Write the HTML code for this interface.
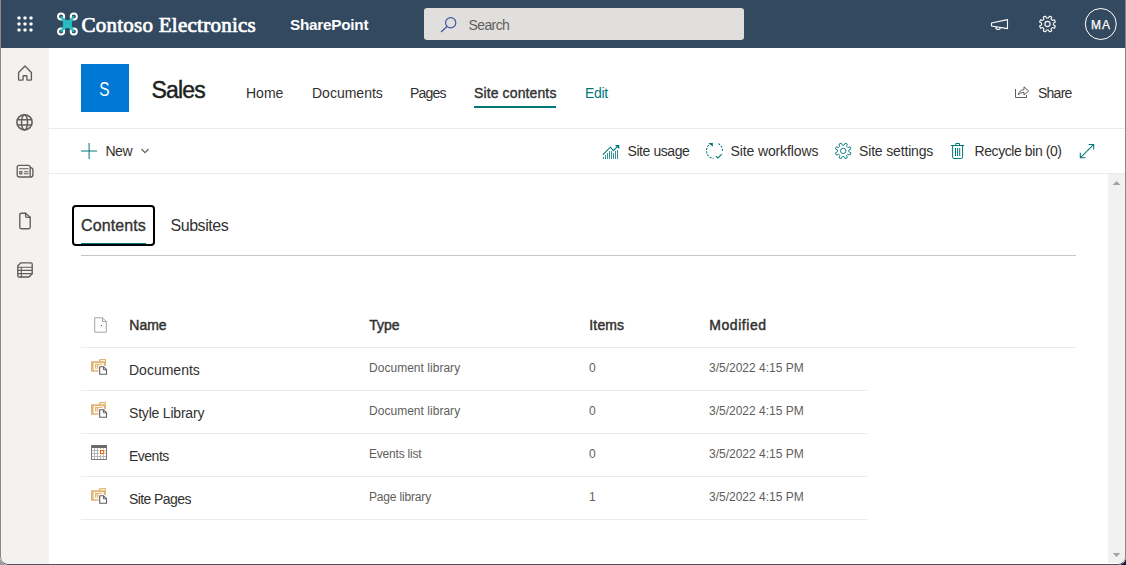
<!DOCTYPE html>
<html>
<head>
<meta charset="utf-8">
<title>Sales - Site contents</title>
<style>
*{box-sizing:border-box;margin:0;padding:0}
html,body{width:1126px;height:565px;overflow:hidden;background:linear-gradient(90deg,#9a9a9a 0,#9a9a9a 50%,#0f1c33 50%,#0f1c33 100%)}
body{font-family:"Liberation Sans",sans-serif;color:#323130;position:relative}
.t{position:absolute;white-space:nowrap;line-height:1}
#win{position:absolute;left:0;top:0;width:1126px;height:565px;background:#fff;overflow:hidden;border-radius:0 0 8px 8px}
#edge{position:absolute;left:0;top:0;width:1126px;height:565px;border:1px solid #8a8886;border-top:0;border-bottom-color:#4f5358;border-radius:0 0 8px 8px}
#hdr{position:absolute;left:1px;top:0;width:1124px;height:47.5px;background:#33495f}
#nav{position:absolute;left:1px;top:48px;width:48px;height:517px;background:#f3f2f1}
#search{position:absolute;left:424px;top:8px;width:320px;height:32px;background:#e1dfdd;border-radius:3px}
#sitelogo{position:absolute;left:81px;top:64px;width:48px;height:48px;background:#0078d4}
.hl{position:absolute;background:#edebe9;height:1px}
#sb{position:absolute;left:1108px;top:174px;width:17px;height:389px;background:#f1f1f1}
</style>
</head>
<body>
<div id="win">
  <!-- top suite bar -->
  <div id="hdr"></div>
  <span class="t" id="brand" style="left:81.5px;top:14.5px;font-family:'Liberation Serif',serif;font-size:21px;letter-spacing:0.25px;-webkit-text-stroke:0.72px #fff;color:#fff">Contoso Electronics</span>
  <span class="t" id="sp" style="left:290px;top:16.7px;font-weight:bold;font-size:15.3px;letter-spacing:-0.25px;color:#fff">SharePoint</span>
  <div id="search"></div>
  <span class="t" id="srch" style="left:468.5px;top:17.5px;font-size:14px;letter-spacing:-0.6px;color:#605e5c">Search</span>

  <span class="t" id="ma" style="left:1091px;top:19.2px;font-size:12px;color:#fff;letter-spacing:0.9px;-webkit-text-stroke:0.25px #fff">MA</span>

  <!-- left nav -->
  <div id="nav"></div>

  <!-- site header -->
  <div id="sitelogo"></div>
  <span class="t" id="sl" style="left:98px;top:79.7px;width:13px;text-align:center;font-size:19.3px;color:#fff;transform:scaleX(.8);transform-origin:50% 50%">S</span>
  <span class="t" id="title" style="left:151.5px;top:79px;font-size:23px;letter-spacing:-0.8px;-webkit-text-stroke:0.45px #201f1e;color:#201f1e">Sales</span>
  <span class="t" id="n1" style="left:246px;top:86px;font-size:14px">Home</span>
  <span class="t" id="n2" style="left:312px;top:86px;font-size:14px">Documents</span>
  <span class="t" id="n3" style="left:410px;top:86px;font-size:14px;letter-spacing:-0.8px">Pages</span>
  <span class="t" id="n4" style="left:474px;top:86px;font-size:14px;letter-spacing:0.12px;-webkit-text-stroke:0.35px #323130">Site contents</span>
  <div style="position:absolute;left:474px;top:106px;width:82px;height:2px;background:#03787c"></div>
  <span class="t" id="n5" style="left:585px;top:86px;font-size:14px;letter-spacing:-0.3px;color:#03787c">Edit</span>
  <span class="t" id="share" style="left:1038px;top:86px;font-size:14px;letter-spacing:-0.75px">Share</span>
  <div class="hl" style="left:49px;top:128px;width:1076px"></div>

  <!-- command bar -->
  <span class="t" id="new" style="left:105.5px;top:144px;font-size:14px;letter-spacing:-0.5px">New</span>
  <span class="t" id="c1" style="left:627.5px;top:144px;font-size:14px;letter-spacing:-0.42px">Site usage</span>
  <span class="t" id="c2" style="left:730.5px;top:144px;font-size:14px;letter-spacing:-0.12px">Site workflows</span>
  <span class="t" id="c3" style="left:859px;top:144px;font-size:14px;letter-spacing:-0.16px">Site settings</span>
  <span class="t" id="c4" style="left:974.5px;top:144px;font-size:14px;letter-spacing:-0.42px">Recycle bin (0)</span>
  <div class="hl" style="left:49px;top:173px;width:1076px"></div>

  <!-- tabs -->
  <div style="position:absolute;left:72px;top:205px;width:83px;height:41px;border:2px solid #000;border-radius:4px"></div>
  <span class="t" id="tab1" style="left:81px;top:217.6px;font-size:16px;letter-spacing:0.1px;-webkit-text-stroke:0.35px #323130">Contents</span>
  <div style="position:absolute;left:81px;top:243px;width:65px;height:1px;background:#03787c"></div>
  <span class="t" id="tab2" style="left:170.5px;top:217.6px;font-size:16px;letter-spacing:-0.45px">Subsites</span>
  <div class="hl" style="left:81px;top:255px;width:995px;background:#c8c6c4"></div>

  <!-- table -->
  <span class="t" id="h1" style="left:129.3px;top:318px;font-size:14px;-webkit-text-stroke:0.45px #323130">Name</span>
  <span class="t" id="h2" style="left:369.3px;top:318px;font-size:14px;-webkit-text-stroke:0.45px #323130">Type</span>
  <span class="t" id="h3" style="left:589.3px;top:318px;font-size:14px;-webkit-text-stroke:0.45px #323130;letter-spacing:0.15px">Items</span>
  <span class="t" id="h4" style="left:709.3px;top:318px;font-size:14px;-webkit-text-stroke:0.45px #323130;letter-spacing:0.55px">Modified</span>
  <div class="hl" style="left:81px;top:347px;width:995px"></div>

  <span class="t" id="r1a" style="left:129px;top:363px;font-size:14px">Documents</span>
  <span class="t" id="r1b" style="left:369px;top:362px;font-size:12px;color:#605e5c;letter-spacing:0.03px">Document library</span>
  <span class="t" id="r1c" style="left:589px;top:362px;font-size:12px;color:#605e5c">0</span>
  <span class="t" id="r1d" style="left:709px;top:362px;font-size:12px;color:#605e5c">3/5/2022 4:15 PM</span>
  <div class="hl" style="left:81px;top:390px;width:786px"></div>

  <span class="t" id="r2a" style="left:129px;top:406px;font-size:14px;letter-spacing:-0.2px">Style Library</span>
  <span class="t" id="r2b" style="left:369px;top:405px;font-size:12px;color:#605e5c;letter-spacing:0.03px">Document library</span>
  <span class="t" id="r2c" style="left:589px;top:405px;font-size:12px;color:#605e5c">0</span>
  <span class="t" id="r2d" style="left:709px;top:405px;font-size:12px;color:#605e5c">3/5/2022 4:15 PM</span>
  <div class="hl" style="left:81px;top:433px;width:786px"></div>

  <span class="t" id="r3a" style="left:129px;top:449px;font-size:14px;letter-spacing:-0.5px">Events</span>
  <span class="t" id="r3b" style="left:369px;top:448px;font-size:12px;color:#605e5c;letter-spacing:-0.2px">Events list</span>
  <span class="t" id="r3c" style="left:589px;top:448px;font-size:12px;color:#605e5c">0</span>
  <span class="t" id="r3d" style="left:709px;top:448px;font-size:12px;color:#605e5c">3/5/2022 4:15 PM</span>
  <div class="hl" style="left:81px;top:476px;width:786px"></div>

  <span class="t" id="r4a" style="left:129px;top:492px;font-size:14px;letter-spacing:-0.58px">Site Pages</span>
  <span class="t" id="r4b" style="left:369px;top:491px;font-size:12px;color:#605e5c;letter-spacing:-0.17px">Page library</span>
  <span class="t" id="r4c" style="left:589px;top:491px;font-size:12px;color:#605e5c">1</span>
  <span class="t" id="r4d" style="left:709px;top:491px;font-size:12px;color:#605e5c">3/5/2022 4:15 PM</span>
  <div class="hl" style="left:81px;top:519px;width:786px"></div>


  <!-- scrollbar -->
  <div id="sb"></div>

  <!-- icon overlay in page coordinates -->
  <svg id="ico" style="position:absolute;left:0;top:0" width="1126" height="565" viewBox="0 0 1126 565" fill="none">
    <!-- waffle -->
    <g fill="#fff">
      <rect x="17.5" y="16.5" width="3" height="3" rx=".7"/><rect x="23.5" y="16.5" width="3" height="3" rx=".7"/><rect x="29.5" y="16.5" width="3" height="3" rx=".7"/>
      <rect x="17.5" y="22.5" width="3" height="3" rx=".7"/><rect x="23.5" y="22.5" width="3" height="3" rx=".7"/><rect x="29.5" y="22.5" width="3" height="3" rx=".7"/>
      <rect x="17.5" y="28.5" width="3" height="3" rx=".7"/><rect x="23.5" y="28.5" width="3" height="3" rx=".7"/><rect x="29.5" y="28.5" width="3" height="3" rx=".7"/>
    </g>
    <!-- drone logo -->
    <g stroke="#fff" stroke-width="1.95">
      <circle cx="61.1" cy="16.5" r="3.05"/><circle cx="73.8" cy="16.5" r="3.05"/><circle cx="61.1" cy="31.5" r="3.05"/><circle cx="73.8" cy="31.5" r="3.05"/>
    </g>
    <path d="M61.3 16.9 Q64.5 21.2 67.4 21.2 Q70.3 21.2 73.5 16.9 Q70.6 20.8 70.8 24.1 Q70.6 27.4 73.5 31.3 Q70.3 27 67.4 27 Q64.5 27 61.3 31.3 Q64.2 27.4 64 24.1 Q64.2 20.8 61.3 16.9 Z" fill="#25bcc2" stroke="#25bcc2" stroke-width="1.9" stroke-linejoin="round"/>
    <!-- search -->
    <g stroke="#3b50a0" stroke-width="1.15">
      <circle cx="450.7" cy="22.8" r="5.1"/><path d="M447 26.5 L441 32"/>
    </g>
    <!-- megaphone -->
    <g stroke="#fff" stroke-width="1.1" stroke-linejoin="round">
      <path d="M1007.5 19.6 L991.5 23 V26 L1007.5 28.6 Z"/>
      <path d="M996 27 A2.2 2.2 0 0 0 1000.4 27.6"/>
    </g>
    <!-- gear (header) -->
    <path d="M1053.43 24.89 L1055.36 25.94 L1054.43 28.19 L1052.33 27.56 L1051.06 28.83 L1051.69 30.93 L1049.44 31.86 L1048.39 29.93 L1046.61 29.93 L1045.56 31.86 L1043.31 30.93 L1043.94 28.83 L1042.67 27.56 L1040.57 28.19 L1039.64 25.94 L1041.57 24.89 L1041.57 23.11 L1039.64 22.06 L1040.57 19.81 L1042.67 20.44 L1043.94 19.17 L1043.31 17.07 L1045.56 16.14 L1046.61 18.07 L1048.39 18.07 L1049.44 16.14 L1051.69 17.07 L1051.06 19.17 L1052.33 20.44 L1054.43 19.81 L1055.36 22.06 L1053.43 23.11 Z" stroke="#fff" stroke-width="1.1" stroke-linejoin="round"/><circle cx="1047.5" cy="24" r="2.6" stroke="#fff" stroke-width="1.1"/>
    <!-- avatar -->
    <circle cx="1100.8" cy="24" r="15.5" stroke="#fff" stroke-width="1"/>

    <!-- left nav icons -->
    <g stroke="#605e5c" stroke-width="1.35" stroke-linejoin="round" stroke-linecap="round">
      <path d="M18.6 72.4 L25 66 L31.4 72.4 V79.5 Q31.4 80.1 30.8 80.1 H27.5 Q26.9 80.1 26.9 79.5 V76.4 Q26.9 75.7 26.2 75.7 H23.8 Q23.1 75.7 23.1 76.4 V79.5 Q23.1 80.1 22.5 80.1 H19.2 Q18.6 80.1 18.6 79.5 Z"/>
      <circle cx="24.5" cy="122.3" r="7.6" stroke-width="1.6"/>
      <ellipse cx="24.5" cy="122.3" rx="3" ry="7.6" stroke-width="1.5"/>
      <path d="M17.4 119.8 H31.6 M17.4 124.9 H31.6" stroke-width="1.5"/>
      <path d="M30.6 177 H19 Q17.2 177 17.2 175.2 V167.3 Q17.2 165.4 19 165.4 H28.4 Q30.2 165.4 30.2 167.3 V175.5"/>
      <path d="M30.4 167.6 Q32.9 167.9 32.9 170 V174.7 Q32.9 177 30.6 177"/>
      <path d="M19.6 168.7 H28.2 M24.3 171.7 H28.2 M24.3 173.8 H28.2" stroke-width="1.1"/>
      <rect x="19.7" y="171.6" width="2.2" height="2.3" stroke-width="1.1"/>
      <path d="M25.6 213.2 H21.2 Q19.8 213.2 19.8 214.6 V227.3 Q19.8 228.7 21.2 228.7 H28.8 Q30.2 228.7 30.2 227.3 V217.3 Z"/>
      <path d="M25.6 213.2 V216 Q25.6 217.3 26.9 217.3 H30.2"/>
      <path d="M20.6 262.9 H31 Q32.2 262.9 32.2 264.1 V273.7 L28.9 277 H19 Q17.8 277 17.8 275.8 V265.7 Z"/>
      <path d="M17.8 267.3 H32.2 M17.8 270.4 H32.2 M17.8 273.6 H32.2 M21.3 267.3 V277" stroke-width="1.1"/>
    </g>
    <!-- share -->
    <g stroke="#605e5c" stroke-width="1">
      <path d="M1015.5 89 V97.5 H1026.5 V95"/>
      <path d="M1018.3 94.8 Q1019 90.2 1024 89.6 V86.8 L1028.6 91 L1024 95 V92.4 Q1020.4 92 1018.3 94.8 Z" stroke-linejoin="round"/>
    </g>
    <!-- plus / chevron -->
    <path d="M81 151 H97 M89.1 143 V159" stroke="#03787c" stroke-width="1"/>
    <path d="M141.5 149 L145 152.6 L148.5 149" stroke="#605e5c" stroke-width="1.1"/>
    <!-- site usage chart -->
    <g stroke="#03787c" stroke-width="1">
      <path d="M603.5 159 V157 M605.5 159 V155 M607.5 159 V153 M609.5 159 V151 M611.5 159 V151 M613.5 159 V153 M615.5 159 V151 M617.5 159 V150" stroke-opacity=".8"/>
      <path d="M602.8 154.8 L610.3 147.2 L613.5 150.6 L618 145.9" stroke-width="1.1"/>
      <path d="M615 145 H619.3 V149.3 Z" fill="#03787c" stroke="none"/>
    </g>
    <!-- workflows -->
    <g stroke="#03787c" stroke-width="1.05">
      <path d="M711.50 143.28 A8.0 8.0 0 0 0 713.53 158.64" stroke-dasharray="2.1 1.2"/>
      <path d="M718.26 143.64 A8.0 8.0 0 0 1 722.50 150.98" stroke-dasharray="2.1 1.2"/>
      <path d="M708.4 143.1 H712.9 V146.8 Z" fill="#03787c" stroke="none"/>
      <path d="M715.9 156.2 L717.9 158 L721.9 154.1"/>
    </g>
    <!-- site settings gear -->
    <path d="M848.84 151.75 L850.97 152.82 L850.05 155.04 L847.78 154.29 L846.59 155.48 L847.34 157.75 L845.12 158.67 L844.05 156.54 L842.35 156.54 L841.28 158.67 L839.06 157.75 L839.81 155.48 L838.62 154.29 L836.35 155.04 L835.43 152.82 L837.56 151.75 L837.56 150.05 L835.43 148.98 L836.35 146.76 L838.62 147.51 L839.81 146.32 L839.06 144.05 L841.28 143.13 L842.35 145.26 L844.05 145.26 L845.12 143.13 L847.34 144.05 L846.59 146.32 L847.78 147.51 L850.05 146.76 L850.97 148.98 L848.84 150.05 Z" stroke="#03787c" stroke-width=".9" stroke-linejoin="round"/>
    <circle cx="843.2" cy="150.9" r="2.7" stroke="#03787c" stroke-width=".9"/>
    <!-- recycle bin -->
    <g stroke="#03787c" stroke-width="1">
      <path d="M951 145.5 H964.2 M955.8 145.5 V143.5 H959.5 V145.5"/>
      <path d="M952.6 145.5 V157.2 Q952.6 158.5 953.9 158.5 H961.3 Q962.6 158.5 962.6 157.2 V145.5"/>
      <path d="M955.5 148 V156 M957.6 148 V156 M959.7 148 V156"/>
    </g>
    <!-- expand -->
    <path d="M1080.3 157.8 L1093.7 144.4 M1088.6 144.4 H1093.7 V149.5 M1080.3 152.7 V157.8 H1085.4" stroke="#03787c" stroke-width="1.05"/>
    <!-- header doc icon -->
    <path d="M94.7 317.8 H102.5 L106.3 321.6 V332.2 H94.7 Z M102.5 317.8 V321.6 H106.3" stroke="#a6a4a2" stroke-width="1"/>
    <rect x="101" y="325" width="1" height="1" fill="#7a3030"/>

    <g transform="translate(0 0)">
      <path d="M91 361.2 H98.6 L99.6 359 H106 V366 H98.5 V371.8 H91 Z" fill="#e3b675"/>
      <rect x="100.4" y="360.2" width="4.6" height="1" fill="#fff"/>
      <rect x="93.6" y="363.2" width="10.2" height="7" fill="#fff"/>
      <rect x="95" y="364.1" width="3.3" height="4.6" fill="#e3b675"/><rect x="95" y="364.1" width="7.2" height="0.9" fill="#e3b675"/>
      <rect x="96" y="365.3" width="1.2" height="1.1" fill="#fff"/><rect x="96" y="367.2" width="1.2" height="1.1" fill="#fff"/>
      <path d="M99.7 366.8 H103.6 L106.5 369.6 V374.3 H99.7 Z" fill="#fff" stroke="#5f5f5f" stroke-width="1.1" stroke-linejoin="round"/>
      <path d="M103.4 366.8 V369.8 H106.5" stroke="#5f5f5f" stroke-width="1"/>
    </g>
    <g transform="translate(0 43)">
      <path d="M91 361.2 H98.6 L99.6 359 H106 V366 H98.5 V371.8 H91 Z" fill="#e3b675"/>
      <rect x="100.4" y="360.2" width="4.6" height="1" fill="#fff"/>
      <rect x="93.6" y="363.2" width="10.2" height="7" fill="#fff"/>
      <rect x="95" y="364.1" width="3.3" height="4.6" fill="#e3b675"/><rect x="95" y="364.1" width="7.2" height="0.9" fill="#e3b675"/>
      <rect x="96" y="365.3" width="1.2" height="1.1" fill="#fff"/><rect x="96" y="367.2" width="1.2" height="1.1" fill="#fff"/>
      <path d="M99.7 366.8 H103.6 L106.5 369.6 V374.3 H99.7 Z" fill="#fff" stroke="#5f5f5f" stroke-width="1.1" stroke-linejoin="round"/>
      <path d="M103.4 366.8 V369.8 H106.5" stroke="#5f5f5f" stroke-width="1"/>
    </g>
    <g transform="translate(0 129)">
      <path d="M91 361.2 H98.6 L99.6 359 H106 V366 H98.5 V371.8 H91 Z" fill="#e3b675"/>
      <rect x="100.4" y="360.2" width="4.6" height="1" fill="#fff"/>
      <rect x="93.6" y="363.2" width="10.2" height="7" fill="#fff"/>
      <rect x="95" y="364.1" width="3.3" height="4.6" fill="#e3b675"/><rect x="95" y="364.1" width="7.2" height="0.9" fill="#e3b675"/>
      <rect x="96" y="365.3" width="1.2" height="1.1" fill="#fff"/><rect x="96" y="367.2" width="1.2" height="1.1" fill="#fff"/>
      <path d="M99.7 366.8 H103.6 L106.5 369.6 V374.3 H99.7 Z" fill="#fff" stroke="#5f5f5f" stroke-width="1.1" stroke-linejoin="round"/>
      <path d="M103.4 366.8 V369.8 H106.5" stroke="#5f5f5f" stroke-width="1"/>
    </g>
    <g>
      <rect x="91" y="445" width="16" height="15" fill="#b9b9b9"/>
      <rect x="91" y="445" width="16" height="3" fill="#6a6a6a"/>
      <path d="M91.5 445 V459.5 H106.5 V445" stroke="#7a7a7a" stroke-width="1"/>
      <rect x="92" y="448" width="2" height="2" fill="#fff"/>
      <rect x="95" y="448" width="2" height="2" fill="#fff"/>
      <rect x="98" y="448" width="2" height="2" fill="#fff"/>
      <rect x="101" y="448" width="2" height="2" fill="#fff"/>
      <rect x="104" y="448" width="2" height="2" fill="#fff"/>
      <rect x="92" y="451" width="2" height="2" fill="#fff"/>
      <rect x="95" y="451" width="2" height="2" fill="#fff"/>
      <rect x="98" y="451" width="2" height="2" fill="#fff"/>
      <rect x="101" y="451" width="2" height="2" fill="#fff"/>
      <rect x="104" y="451" width="2" height="2" fill="#fff"/>
      <rect x="92" y="454" width="2" height="2" fill="#fff"/>
      <rect x="95" y="454" width="2" height="2" fill="#fff"/>
      <rect x="98" y="454" width="2" height="2" fill="#fff"/>
      <rect x="101" y="454" width="2" height="2" fill="#fff"/>
      <rect x="104" y="454" width="2" height="2" fill="#fff"/>
      <rect x="92" y="457" width="2" height="2" fill="#fff"/>
      <rect x="95" y="457" width="2" height="2" fill="#fff"/>
      <rect x="98" y="457" width="2" height="2" fill="#fff"/>
      <rect x="101" y="457" width="2" height="2" fill="#fff"/>
      <rect x="104" y="457" width="2" height="2" fill="#fff"/>
      <rect x="99" y="449" width="6" height="6" fill="#fff"/>
      <rect x="100.5" y="450.5" width="3.2" height="3.2" stroke="#e2670c" stroke-width="1.1" fill="#fff"/>
    </g>

    <path d="M1112.5 184.9 L1116.5 180.9 L1120.5 184.9 Z" fill="#a3a3a3"/>
    <path d="M1112.8 553 L1116.5 557 L1120.2 553 Z" fill="#a3a3a3"/>
  </svg>

  <div id="edge"></div>
</div>
</body>
</html>
